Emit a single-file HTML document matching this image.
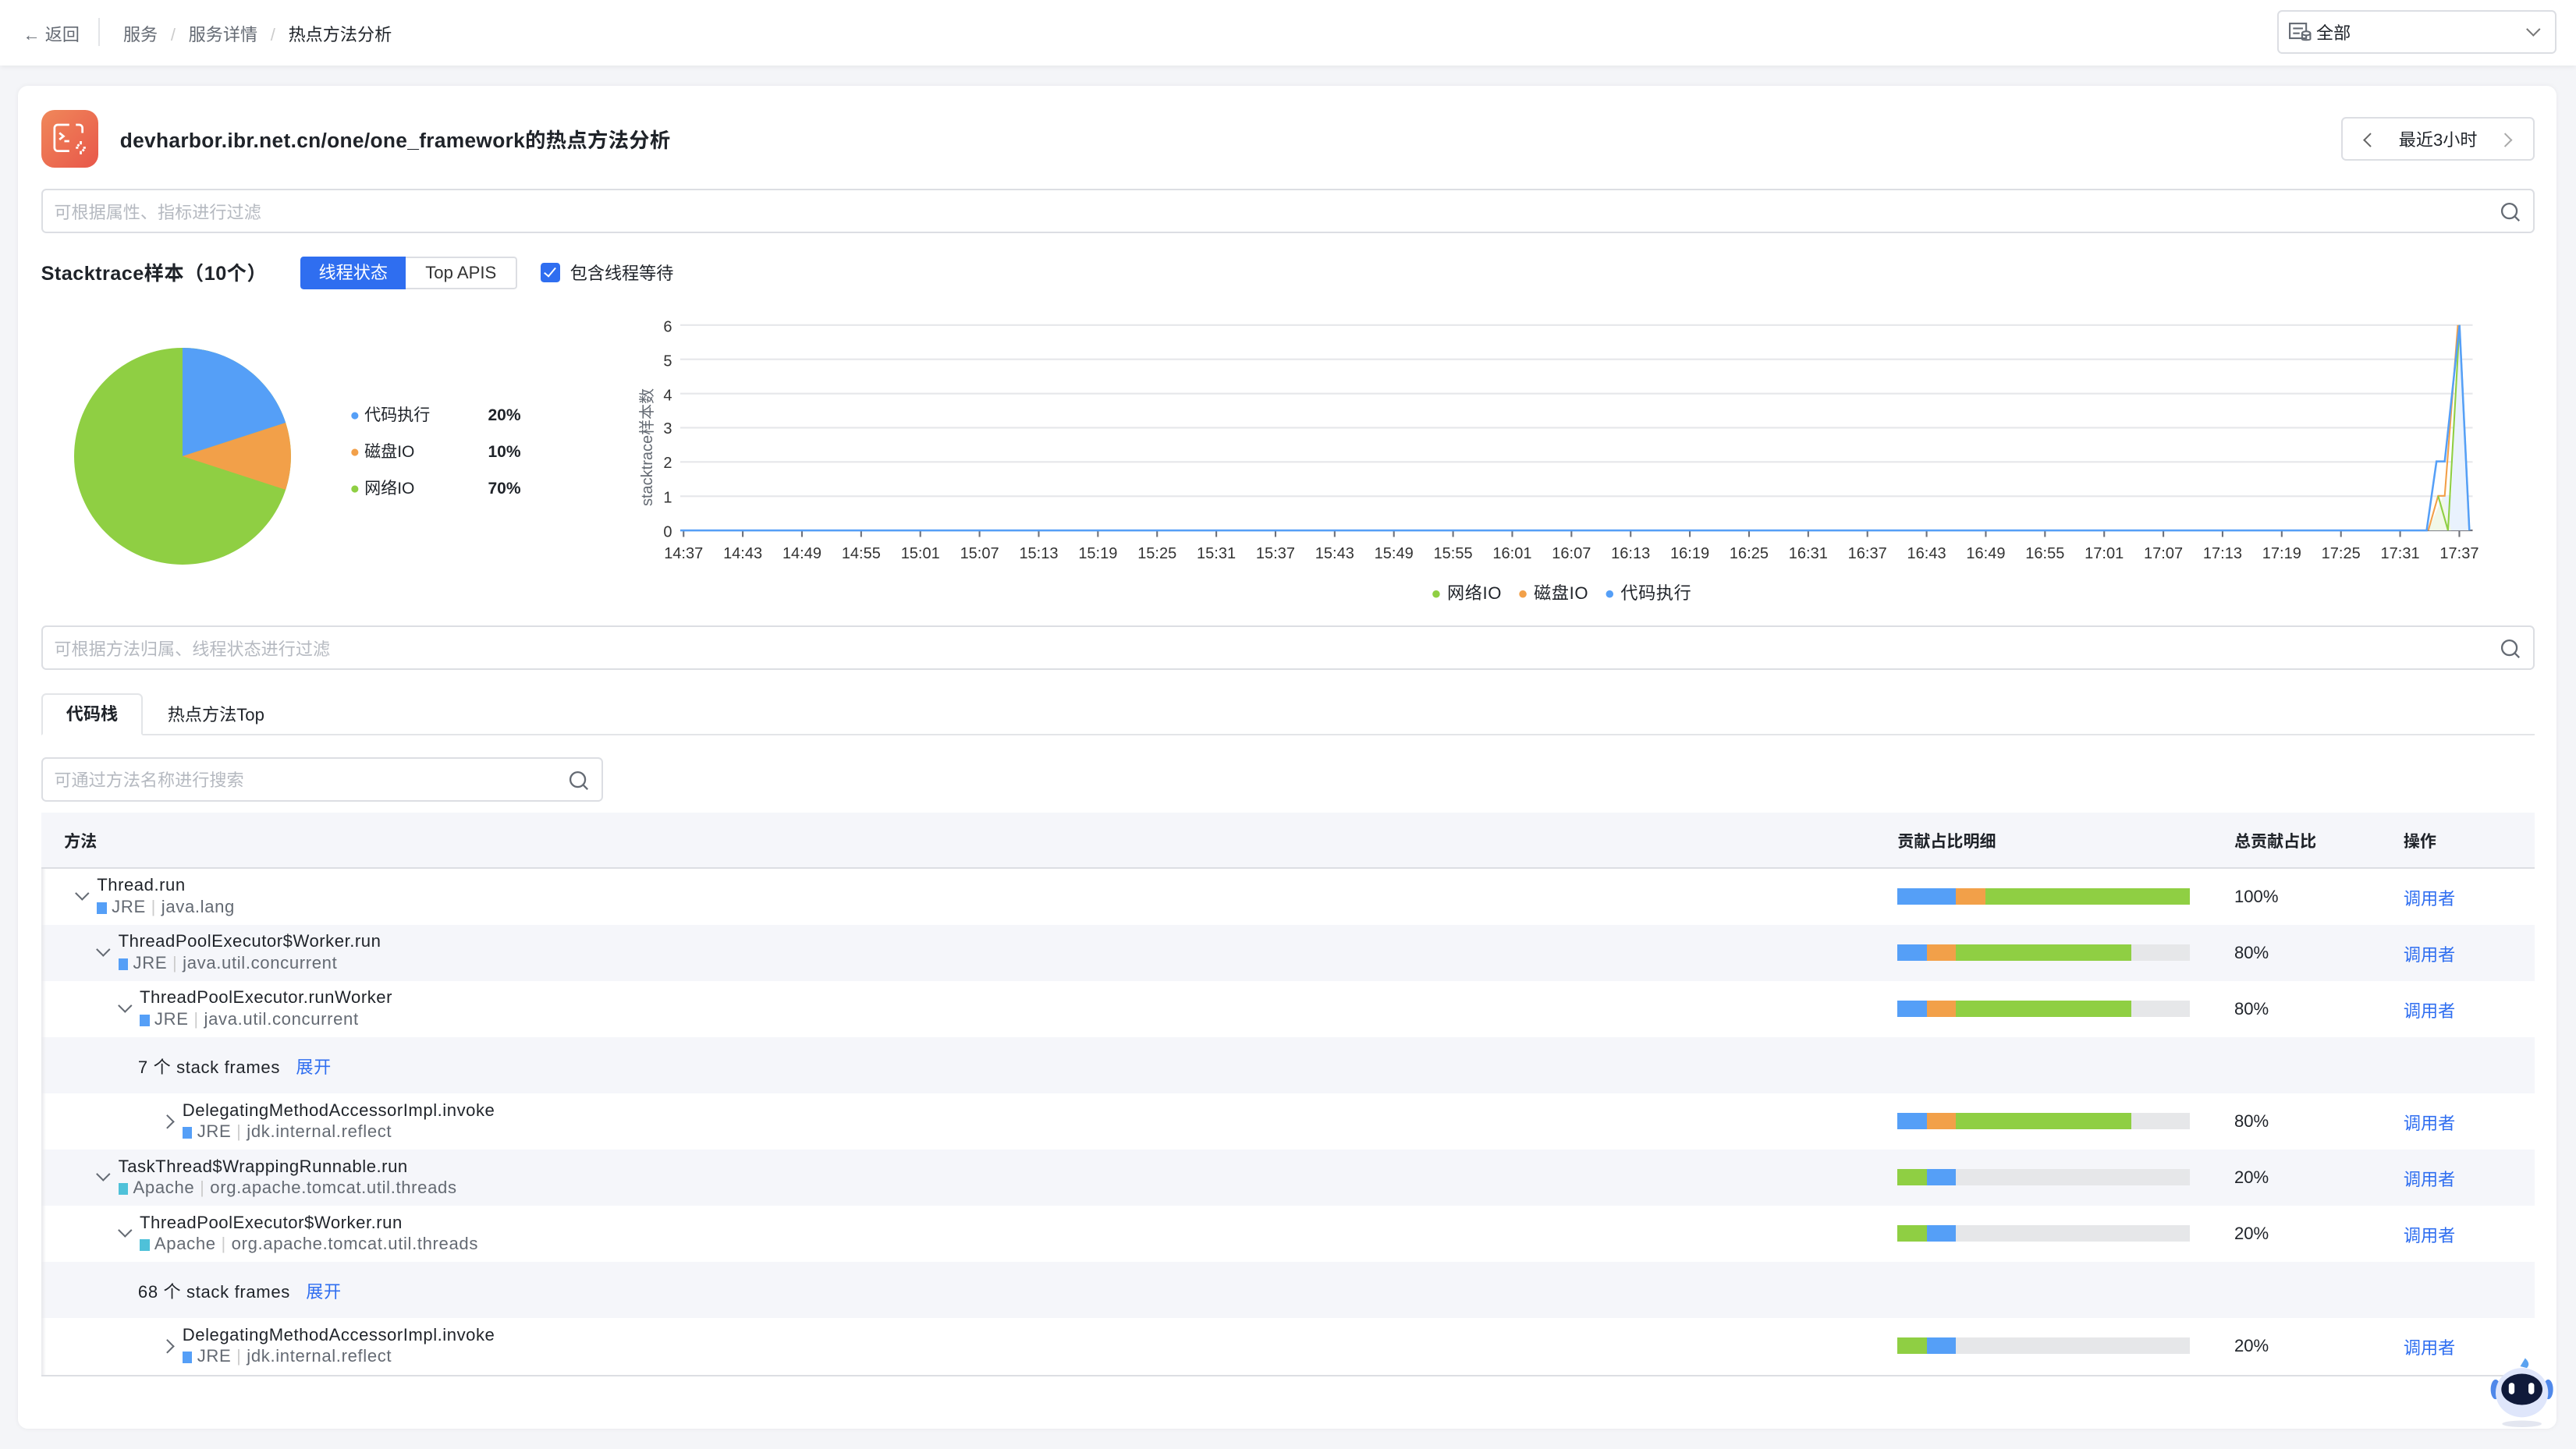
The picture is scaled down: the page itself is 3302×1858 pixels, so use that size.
<!DOCTYPE html>
<html><head><meta charset="utf-8"><style>
*{box-sizing:border-box;margin:0;padding:0}
html,body{width:3302px;height:1858px;overflow:hidden;background:#f4f5f8}
#w{zoom:2.10587;width:1568px;height:883px;position:relative;font-family:"Liberation Sans","Noto Sans CJK SC",sans-serif;color:#1f2329;font-size:10.5px}
.a{position:absolute;white-space:nowrap}
.top{left:0;top:0;width:1568px;height:40px;background:#fff;box-shadow:0 1px 3px rgba(0,0,0,.06)}
.card{left:11px;top:52px;width:1545px;height:818px;background:#fff;border-radius:6px;box-shadow:0 0 3px rgba(0,0,0,.06)}
.inp{border:1px solid #dcdee3;border-radius:3px;background:#fff;color:#b5b9c0;padding-left:7px;display:flex;align-items:center}
.g{color:#646a73}
.row{left:25px;width:1518px;height:34.2px}
.bar{position:absolute;left:1155px;width:178px;height:10px;background:#e6e7e9;display:flex}
.bar i{display:block;height:10px}
.B{background:#559ff7}.O{background:#f2a049}.G{background:#8fcf43}
.lk{color:#2f6ef0}
.ch{position:absolute;width:6px;height:6px;border-right:1px solid #646a73;border-bottom:1px solid #646a73}
.sq{display:inline-block;width:6px;height:7px;background:#559ff7;margin-right:3px;vertical-align:-1px}
</style></head><body><div id="w">
<div class="a top"></div>
<div class="a g" style="left:14px;top:13px;font-size:10.5px">← 返回</div>
<div class="a" style="left:60px;top:11px;width:1px;height:17px;background:#e3e5e8"></div>
<div class="a g" style="left:75px;top:13px">服务 <span style="color:#ccc;margin:0 5px">/</span> 服务详情 <span style="color:#ccc;margin:0 5px">/</span> <span style="color:#1f2329">热点方法分析</span></div>
<div class="a inp" style="left:1386px;top:6px;width:170px;height:27px;color:#1f2329;padding-left:6px"><svg width="14" height="12" viewBox="0 0 14 12" fill="none" stroke="#646a73" stroke-width="1"><rect x="1" y="1" width="10" height="9"/><path d="M3 4h6M3 7h4"/><ellipse cx="11" cy="7" rx="2.5" ry="1.2" fill="#fff"/><path d="M8.5 7v3.5c0 .7 5 .7 5 0V7"/></svg>&nbsp;全部<span style="position:absolute;right:10px;top:8px;width:6px;height:6px;border-right:1px solid #777;border-bottom:1px solid #777;transform:rotate(45deg)"></span></div>
<div class="a card"></div>
<div class="a" style="left:25px;top:67px;width:35px;height:35px;border-radius:8px;background:linear-gradient(135deg,#f0885a,#e8574a)"><svg width="35" height="35" viewBox="0 0 35 35" fill="none" stroke="#fff" stroke-width="1.3"><path d="M17 9H10a2 2 0 0 0-2 2v12a2 2 0 0 0 2 2h7M21 9h2a2 2 0 0 1 2 2v3"/><path d="M11 14l2.5 2-2.5 2M14 19h3"/><path d="M24 19v2M24 25v2M21 23h1.5M25.5 23h1.5M22 21l1 1M26 25l-1-1"/></svg></div>
<div class="a" style="left:73px;top:75px;font-size:12.5px;font-weight:bold;letter-spacing:0.15px">devharbor.ibr.net.cn/one/one_framework的热点方法分析</div>
<div class="a inp" style="left:1425px;top:71px;width:118px;height:27px;color:#1f2329;padding:0;justify-content:center">最近3小时
<span style="position:absolute;left:14px;top:10px;width:6px;height:6px;border-left:1px solid #666;border-bottom:1px solid #666;transform:rotate(45deg)"></span>
<span style="position:absolute;right:14px;top:10px;width:6px;height:6px;border-right:1px solid #aaa;border-top:1px solid #aaa;transform:rotate(45deg)"></span></div>
<div class="a inp" style="left:25px;top:115px;width:1518px;height:27px">可根据属性、指标进行过滤
<svg style="position:absolute;right:8px;top:7px" width="12" height="12" fill="none" stroke="#646a73" stroke-width="1.1"><circle cx="5.5" cy="5.5" r="4.5"/><path d="M9 9l2.5 2.5"/></svg></div>
<div class="a" style="left:25px;top:157px;font-size:12px;font-weight:bold;letter-spacing:0.2px">Stacktrace样本（10个）</div>
<div class="a" style="left:183px;top:156px;width:64px;height:20px;background:#2f6ef0;color:#fff;border-radius:2px 0 0 2px;text-align:center;line-height:20px">线程状态</div>
<div class="a" style="left:247px;top:156px;width:68px;height:20px;border:1px solid #dcdee3;border-left:0;border-radius:0 2px 2px 0;text-align:center;line-height:18px;color:#333">Top APIS</div>
<div class="a" style="left:329px;top:160px;width:12px;height:12px;background:#2f6ef0;border-radius:2px"><span style="position:absolute;left:4px;top:1.5px;width:4px;height:7px;border-right:1.3px solid #fff;border-bottom:1.3px solid #fff;transform:rotate(40deg)"></span></div>
<div class="a" style="left:347px;top:158px">包含线程等待</div>
<svg class="a" style="left:45px;top:212px" width="132" height="132" viewBox="-66 -66 132 132"><circle r="66" fill="#8fcf43"/><path d="M0 0L0 -66A66 66 0 0 1 62.77 -20.4Z" fill="#559ff7"/><path d="M0 0L62.77 -20.4A66 66 0 0 1 62.77 20.4Z" fill="#f2a049"/></svg>
<div class="a" style="left:213px;top:242px;line-height:22.3px;font-size:10px"><span style="color:#559ff7">●</span> 代码执行<br><span style="color:#f2a049">●</span> 磁盘IO<br><span style="color:#8fcf43">●</span> 网络IO</div>
<div class="a" style="left:297px;top:242px;line-height:22.3px;font-weight:bold;font-size:10px">20%<br>10%<br>70%</div>
<div class="a g" style="left:386px;transform:rotate(-90deg);transform-origin:left top;top:308px;font-size:9.5px">stacktrace样本数</div>
<svg class="a" style="left:395px;top:190px" width="1130" height="160" font-family="Liberation Sans" font-size="9.5" fill="#333">
<g stroke="#e6e7ea"><line x1="19" y1="8" x2="1110" y2="8"/><line x1="19" y1="28.8" x2="1110" y2="28.8"/><line x1="19" y1="49.7" x2="1110" y2="49.7"/><line x1="19" y1="70.5" x2="1110" y2="70.5"/><line x1="19" y1="91.3" x2="1110" y2="91.3"/><line x1="19" y1="112.2" x2="1110" y2="112.2"/></g>
<line x1="19" y1="133" x2="1110" y2="133" stroke="#6e7079"/>
<g text-anchor="end"><text x="14" y="12">6</text><text x="14" y="33">5</text><text x="14" y="54">4</text><text x="14" y="74">3</text><text x="14" y="95">2</text><text x="14" y="116">1</text><text x="14" y="137">0</text></g>
<g id="xl" text-anchor="middle"></g>
<polygon points="1083,133 1092,112 1097,112 1102,8 1108,133" fill="#e9f2fd"/>
<polygon points="1083,133 1092,112 1097,133" fill="#f1f8e8"/>
<polyline points="1083,133 1089,112 1093,112 1101,8" fill="none" stroke="#f2a049" stroke-width="1"/>
<polyline points="1089,112 1095,133 1102,8 1108,133" fill="none" stroke="#8fcf43" stroke-width="1"/>
<polyline points="19,133 1082,133 1088,91 1093,91 1102,8 1108,133" fill="none" stroke="#559ff7" stroke-width="1.2"/>
</svg>
<div class="a" style="left:871px;top:353px;font-size:10.5px;letter-spacing:0.3px"><span style="color:#8fcf43">●</span> 网络IO &nbsp;&nbsp;<span style="color:#f2a049">●</span> 磁盘IO &nbsp;&nbsp;<span style="color:#559ff7">●</span> 代码执行</div>
<div class="a inp" style="left:25px;top:381px;width:1518px;height:27px">可根据方法归属、线程状态进行过滤
<svg style="position:absolute;right:8px;top:7px" width="12" height="12" fill="none" stroke="#646a73" stroke-width="1.1"><circle cx="5.5" cy="5.5" r="4.5"/><path d="M9 9l2.5 2.5"/></svg></div>
<div class="a" style="left:25px;top:447px;width:1518px;height:1px;background:#e3e5e8"></div>
<div class="a" style="left:25px;top:422px;width:62px;height:26px;border:1px solid #e3e5e8;border-bottom:1px solid #fff;border-radius:3px 3px 0 0;background:#fff;text-align:center;line-height:24px;font-weight:bold">代码栈</div>
<div class="a" style="left:102px;top:427px">热点方法Top</div>
<div class="a inp" style="left:25px;top:461px;width:342px;height:27px">可通过方法名称进行搜索
<svg style="position:absolute;right:8px;top:7px" width="12" height="12" fill="none" stroke="#646a73" stroke-width="1.1"><circle cx="5.5" cy="5.5" r="4.5"/><path d="M9 9l2.5 2.5"/></svg></div>
<div class="a" style="left:25px;top:495px;width:1518px;height:34px;background:#f5f6fa;border-bottom:1px solid #dcdee3;font-weight:bold;font-size:10px">
<span class="a" style="left:14px;top:10px">方法</span><span class="a" style="left:1130px;top:10px">贡献占比明细</span><span class="a" style="left:1335px;top:10px">总贡献占比</span><span class="a" style="left:1438px;top:10px">操作</span></div>
<div id="rows"></div>
<div class="a" style="left:25px;top:529px;width:3px;height:308px;background:linear-gradient(90deg,#e8e9ec,#fff0)"></div>
<div class="a" style="left:25px;top:837px;width:1518px;height:1px;background:#dcdee3"></div>
<svg class="a" style="left:1510px;top:822px" width="48" height="48" viewBox="0 0 48 48"><path d="M27 5c2 2 3 4 1 6l-4-1z" fill="#5aa2f0"/><ellipse cx="25" cy="45" rx="12" ry="2" fill="#e3e6f0"/><ellipse cx="9" cy="24" rx="3" ry="6" fill="#4f88ea"/><ellipse cx="41" cy="24" rx="3" ry="6" fill="#4f88ea"/><ellipse cx="25" cy="26" rx="16" ry="15" fill="#dfe6fb"/><ellipse cx="25" cy="24" rx="12.5" ry="9.5" fill="#101a3a"/><rect x="17" y="20" width="3.5" height="7" rx="1.7" fill="#fff"/><rect x="29" y="20" width="3.5" height="7" rx="1.7" fill="#fff"/></svg>
</div>
<script>
var xl=document.getElementById('xl'),s='';
for(var i=0;i<31;i++){var m=14*60+37+i*6;var t=Math.floor(m/60)+':'+('0'+m%60).slice(-2);var x=21+i*36.03;s+='<line x1="'+x+'" y1="133" x2="'+x+'" y2="137" stroke="#6e7079"/><text x="'+x+'" y="150">'+t+'</text>';}
xl.innerHTML=s;
var R=[[0,'Thread.run','JRE','java.lang',[['B',20],['O',10],['G',70]],'100%','d'],
[1,'ThreadPoolExecutor$Worker.run','JRE','java.util.concurrent',[['B',10],['O',10],['G',60]],'80%','d'],
[2,'ThreadPoolExecutor.runWorker','JRE','java.util.concurrent',[['B',10],['O',10],['G',60]],'80%','d'],
['f','7 个 stack frames'],
[4,'DelegatingMethodAccessorImpl.invoke','JRE','jdk.internal.reflect',[['B',10],['O',10],['G',60]],'80%','r'],
[1,'TaskThread$WrappingRunnable.run','Apache','org.apache.tomcat.util.threads',[['G',10],['B',10]],'20%','d'],
[2,'ThreadPoolExecutor$Worker.run','Apache','org.apache.tomcat.util.threads',[['G',10],['B',10]],'20%','d'],
['f','68 个 stack frames'],
[4,'DelegatingMethodAccessorImpl.invoke','JRE','jdk.internal.reflect',[['G',10],['B',10]],'20%','r']];
var h='';
R.forEach(function(r,i){var top=529+i*34.2;var bg=i%2?'#f5f6fa':'#fff';
h+='<div class="a row" style="top:'+top+'px;background:'+bg+'"></div>';
if(r[0]==='f'){h+='<div class="a" style="left:84px;top:'+(top+10)+'px;letter-spacing:0.3px">'+r[1]+' &nbsp;&nbsp;<span class="lk">展开</span></div>';return;}
var lv=r[0],tx=59+lv*13;if(lv==4)tx=111;var cx=tx-11;
h+='<span class="ch" style="left:'+(cx-1)+'px;top:'+(top+(r[6]=='d'?12:14))+'px;transform:rotate('+(r[6]=='d'?45:-45)+'deg)"></span>';
h+='<div class="a" style="left:'+tx+'px;top:'+(top+4)+'px;font-size:10.5px;letter-spacing:0.25px">'+r[1]+'</div>';
h+='<div class="a g" style="left:'+tx+'px;top:'+(top+17)+'px;font-size:10.5px;letter-spacing:0.3px"><span class="sq" style="background:'+(r[2]=='Apache'?'#4fc1d9':'#559ff7')+'"></span>'+r[2]+' <span style="color:#ccc">|</span> '+r[3]+'</div>';
h+='<div class="bar" style="top:'+(top+12)+'px">'+r[4].map(function(b){return '<i class="'+b[0]+'" style="width:'+b[1]+'%"></i>'}).join('')+'</div>';
h+='<div class="a" style="left:1360px;top:'+(top+11)+'px">'+r[5]+'</div><div class="a lk" style="left:1463px;top:'+(top+10)+'px">调用者</div>';});
document.getElementById('rows').innerHTML=h;
</script>
</body></html>
